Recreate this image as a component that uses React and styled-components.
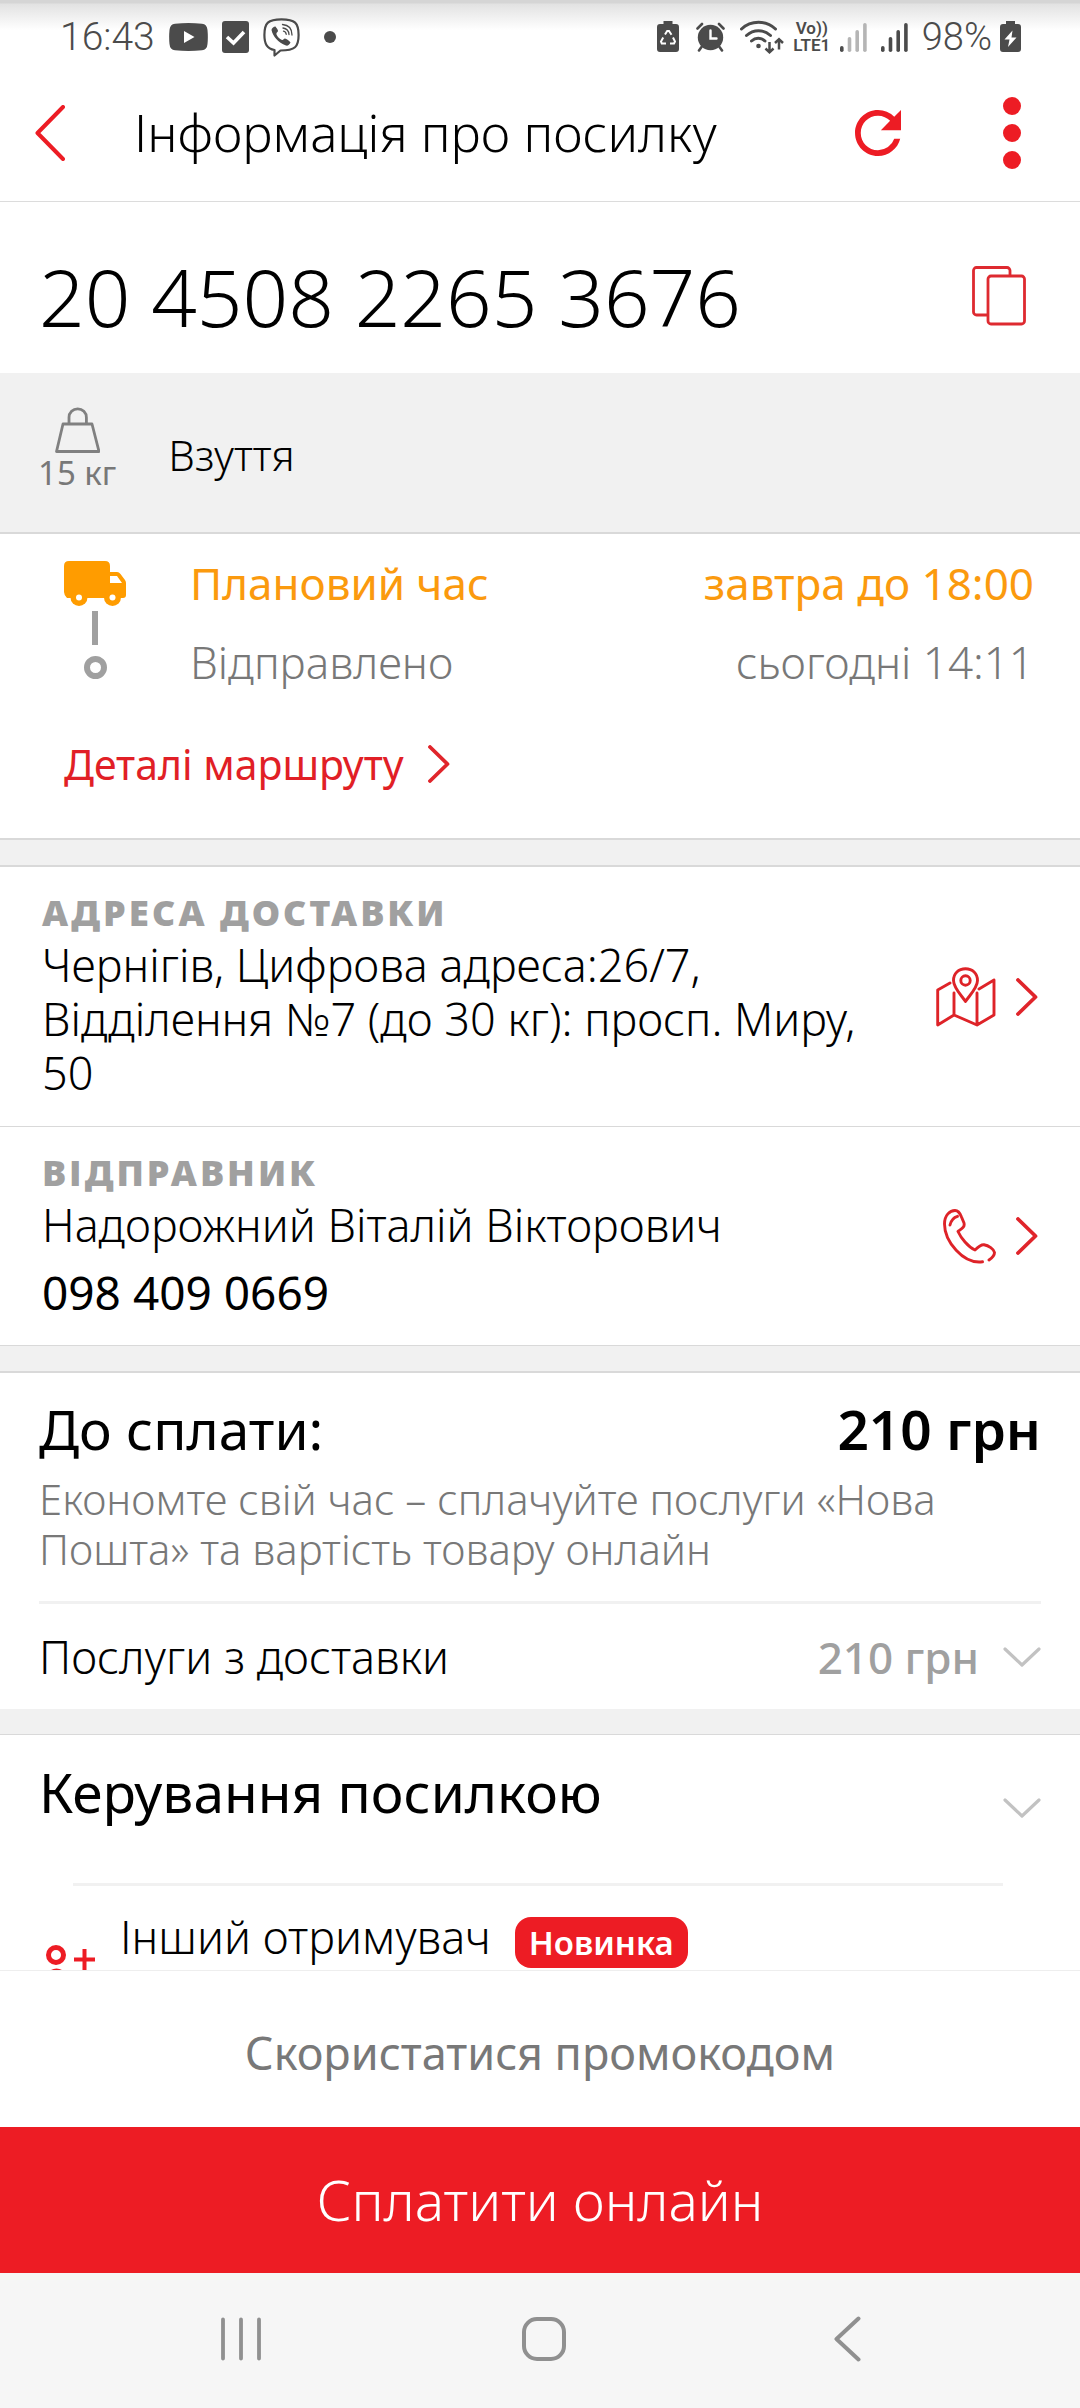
import styled, { createGlobalStyle } from 'styled-components'

const RED = '#ed1c24'
const GREY = '#787878'

const App = () => {
    return (
        <Page>
            <GlobalStyle />
            <StatusBar>
                <StatusSide>
                    <Clock>16:43</Clock>
                    <YoutubeIcon />
                    <TaskIcon />
                    <ViberIcon />
                    <Dot />
                </StatusSide>
                <StatusSide $tight>
                    <RecycleBatteryIcon />
                    <AlarmIcon />
                    <WifiIcon />
                    <Volte>
                        <span>Vo))</span>
                        <span>LTE1</span>
                    </Volte>
                    <SignalIcon level={1} />
                    <SignalIcon level={4} />
                    <Charge>98%</Charge>
                    <ChargingIcon />
                </StatusSide>
            </StatusBar>

            <Header>
                <IconButton aria-label='Назад'>
                    <svg width='30' height='56' viewBox='0 0 30 56' fill='none' stroke={RED} strokeWidth='4' strokeLinecap='round' strokeLinejoin='round'>
                        <path d='M28 2 2.5 28 28 54' />
                    </svg>
                </IconButton>
                <Title>Інформація про посилку</Title>
                <HeaderActions>
                    <IconButton aria-label='Оновити'>
                        <svg width='46' height='46' viewBox='4 4 16 16' fill={RED}>
                            <path d='M17.65 6.35A7.958 7.958 0 0 0 12 4c-4.42 0-7.99 3.58-7.99 8s3.57 8 7.99 8c3.73 0 6.84-2.55 7.73-6h-2.08A5.99 5.99 0 0 1 12 18c-3.31 0-6-2.69-6-6s2.69-6 6-6c1.66 0 3.14.69 4.22 1.78L13 11h7V4l-2.35 2.35z' />
                        </svg>
                    </IconButton>
                    <IconButton aria-label='Меню'>
                        <svg width='18' height='74' viewBox='0 0 18 74' fill={RED}>
                            <circle cx='9' cy='10' r='9' />
                            <circle cx='9' cy='37' r='9' />
                            <circle cx='9' cy='64' r='9' />
                        </svg>
                    </IconButton>
                </HeaderActions>
            </Header>

            <Content>
                <NumberRow>
                    <Number>20 4508 2265 3676</Number>
                    <IconButton aria-label='Копіювати'>
                        <svg width='54' height='60' viewBox='0 0 54 60' fill='none' stroke='#de2a30' strokeWidth='2.8'>
                            <path d='M38 9V4.500a3 3 0 0 0-3-3H4.500a3 3 0 0 0-3 3V46a3 3 0 0 0 3 3H15' />
                            <rect x='16' y='10' width='36.500' height='48' rx='3' />
                        </svg>
                    </IconButton>
                </NumberRow>

                <Cargo>
                    <Weight>
                        <svg width='45' height='46' viewBox='0 0 45 46' fill='none' stroke='#808080' strokeWidth='2.800' strokeLinejoin='round'>
                            <path d='M8 17H37L44 44.500H1.500Z' />
                            <path d='M14 17V10.500a8.700 8.700 0 0 1 17.400 0V17' />
                        </svg>
                        <span>15 кг</span>
                    </Weight>
                    <CargoName>Взуття</CargoName>
                </Cargo>

                <Route>
                    <RouteBody>
                        <Timeline>
                            <TruckIcon />
                            <TimelineBar />
                            <TimelineDot />
                        </Timeline>
                        <Steps>
                            <Step $current>
                                <span>Плановий час</span>
                                <span>завтра до 18:00</span>
                            </Step>
                            <Step>
                                <span>Відправлено</span>
                                <span>сьогодні 14:11</span>
                            </Step>
                        </Steps>
                    </RouteBody>
                    <RouteLink href='#route'>
                        Деталі маршруту
                        <ChevronRight />
                    </RouteLink>
                </Route>

                <Gap $top={2} $bottom={2} />

                <Contact href='#address' $line>
                    <ContactText>
                        <Label>Адреса доставки</Label>
                        <p>Чернігів, Цифрова адреса:26/7, Відділення №7 (до 30 кг): просп. Миру, 50</p>
                    </ContactText>
                    <ContactIcons>
                        <MapIcon />
                        <ChevronRight />
                    </ContactIcons>
                </Contact>
                <Contact href='#sender'>
                    <ContactText>
                        <Label>Відправник</Label>
                        <p>Надорожний Віталій Вікторович</p>
                        <Phone>098 409 0669</Phone>
                    </ContactText>
                    <ContactIcons>
                        <PhoneIcon />
                        <ChevronRight />
                    </ContactIcons>
                </Contact>

                <Gap $top={1} $bottom={2} />

                <Payment>
                    <Total>
                        <h2>До сплати:</h2>
                        <strong>210 грн</strong>
                    </Total>
                    <Hint>Економте свій час – сплачуйте послуги «Нова Пошта» та вартість товару онлайн</Hint>
                    <Services>
                        <span>Послуги з доставки</span>
                        <Price>
                            210 грн
                            <ChevronDown />
                        </Price>
                    </Services>
                </Payment>

                <Gap $top={0} $bottom={1} />

                <Manage>
                    <ManageTitle>
                        <h2>Керування посилкою</h2>
                        <ChevronDown />
                    </ManageTitle>
                    <Option>
                        <svg width='50' height='50' viewBox='0 0 50 50' fill='none' stroke={RED}>
                            <circle cx='10' cy='10' r='7.500' strokeWidth='5' />
                            <path d='M38.500 4V25M28 14.500H49' strokeWidth='4' />
                            <path d='M2.500 46V34a8 8 0 0 1 8-8 8 8 0 0 1 8 8v12' strokeWidth='5' />
                        </svg>
                        <span>Інший отримувач</span>
                        <Badge>Новинка</Badge>
                    </Option>
                </Manage>
            </Content>

            <Footer>
                <Promo>Скористатися промокодом</Promo>
                <Pay>Сплатити онлайн</Pay>
            </Footer>

            <SystemNav>
                <IconButton aria-label='Останні'>
                    <svg width='42' height='44' viewBox='0 0 42 44' stroke='#909090' strokeWidth='3.800' strokeLinecap='round'>
                        <path d='M3 2.500V41.500M21 2.500V41.500M39 2.500V41.500' />
                    </svg>
                </IconButton>
                <IconButton aria-label='Головна'>
                    <svg width='44' height='44' viewBox='0 0 44 44' fill='none' stroke='#909090' strokeWidth='4'>
                        <rect x='2' y='2' width='40' height='40' rx='13' />
                    </svg>
                </IconButton>
                <IconButton aria-label='Повернутися'>
                    <svg width='28' height='46' viewBox='0 0 28 46' fill='none' stroke='#909090' strokeWidth='4' strokeLinecap='round' strokeLinejoin='round'>
                        <path d='M25.500 2.500 3.500 23 25.500 43.500' />
                    </svg>
                </IconButton>
            </SystemNav>
        </Page>
    )
}

const YoutubeIcon = () => (
    <svg width='39' height='28' viewBox='0 0 39 28' fill='#4b4b4b'>
        <path fillRule='evenodd' d='M6 .7Q19.500-.6 33 .7 38 1 38.500 7 39.200 14 38.500 21 38 27 33 27.300 19.500 28.600 6 27.300 1 27 .5 21-.2 14 .5 7 1 1 6 .7ZM15 8V20L25.500 14Z' />
    </svg>
)

const TaskIcon = () => (
    <svg width='27' height='32' viewBox='0 0 27 32'>
        <rect width='27' height='32' rx='3' fill='#4b4b4b' />
        <path d='M5 16 11.500 22 22 11' fill='none' stroke='#fff' strokeWidth='3.600' />
    </svg>
)

const ViberIcon = () => (
    <svg width='37' height='39' viewBox='0 0 37 39' fill='none' stroke='#4b4b4b' strokeLinejoin='round' strokeLinecap='round'>
        <path d='M18.500 1.300C32 1.300 35.600 5 35.600 17 35.600 29 32 32.500 17.500 32.500L11.500 37.500V32C4 30.500 1.400 26 1.400 17 1.400 5 5 1.300 18.500 1.300Z' strokeWidth='2.200' />
        <path d='M12.500 8.500C13.500 10 15 11.500 15 13 14.500 14.500 13 14.500 13.500 16.500 14.500 19 16.500 21 19 22 20.500 22.500 20.500 20.500 22 20.500 23.500 20.800 26.500 22.800 27.500 24.500 26.500 27 24.500 28 23 27.500 15 24.500 10 18.500 8.500 12 8.500 10.500 10.500 8.500 12.500 8.500Z' fill='#4b4b4b' stroke='none' />
        <path d='M19.500 6.500C25.500 7 29 11 29 17M20 10C23.500 10.500 25.700 12.500 26 16.500M20.500 13.200C22.200 13.500 23 14.400 23.200 16.300' strokeWidth='1.300' />
    </svg>
)

const RecycleBatteryIcon = () => (
    <svg width='33' height='32' viewBox='0 0 33 32' fill='none'>
        <path d='M6.500 0H15.500V3H19Q22 3 22 6V28Q22 31 19 31H3Q0 31 0 28V6Q0 3 3 3H6.500Z' fill='#4b4b4b' />
        <path d='M8 13.500 10.200 10H12L14.500 13.800M16 16.500 18 20.500 17 22.500H13M9 22.500H4.800L4 20.500 6.200 16.500' stroke='#fff' strokeWidth='2' />
    </svg>
)

const AlarmIcon = () => (
    <svg width='38' height='30' viewBox='0 0 38 30' fill='none' stroke='#4b4b4b' strokeWidth='2.600' strokeLinecap='round'>
        <circle cx='14.500' cy='15.500' r='12.700' fill='#4b4b4b' stroke='none' />
        <path d='M1.500 6.500 6 2M27.500 6.500 23 2M5.500 25 3 28.500M23.500 25 26 28.500' />
        <path d='M14.500 8.500V16.500H20.500' stroke='#fff' strokeWidth='2.400' />
    </svg>
)

const WifiIcon = () => (
    <svg width='44' height='34' viewBox='0 0 44 34' fill='none' stroke='#4b4b4b' strokeWidth='3' strokeLinecap='round'>
        <path d='M1.500 9C11 0 26 0 35.500 9M6.500 15.500C13.500 9 23.500 9 30.500 15.500M11.500 21C15.500 17.300 21 17.300 25 21' />
        <circle cx='18.500' cy='26' r='2.300' fill='#4b4b4b' stroke='none' />
        <path d='M29.500 22V32M25.500 28.500 29.500 32.300 33.500 28.500M39 29.500V19.500M35 23 39 19.200 43 23' strokeWidth='2.500' strokeLinecap='butt' />
    </svg>
)

const SignalIcon = ({ level }) => (
    <svg width='35' height='30' viewBox='0 0 35 30'>
        {[6, 15, 22, 29].map((h, i) => (
            <rect key={h} x={i * 7.700} y={30 - h} width='3.600' height={h} rx='1.800' fill={i < level ? '#4b4b4b' : '#b5b5b5'} />
        ))}
    </svg>
)

const ChargingIcon = () => (
    <svg width='21' height='32' viewBox='0 0 21 32'>
        <path d='M6 0H15V3H18Q21 3 21 6V28Q21 31 18 31H3Q0 31 0 28V6Q0 3 3 3H6Z' fill='#4b4b4b' />
        <path d='M12.500 9.500 4.500 18.500H9.500L8 26 16.500 16.500H11.500Z' fill='#fff' />
    </svg>
)

const TruckIcon = () => (
    <svg width='62' height='45' viewBox='0 0 62 45' fill='#ff9c00'>
        <path fillRule='evenodd' d='M5 0H41Q46 0 46 5V11H53Q55 11 56.500 13L61 19Q62 20.500 62 22V34Q62 37 59 37H3Q0 34 0 31V5Q0 0 5 0ZM46 15V22H58L53 15Z' />
        <circle cx='15' cy='36.500' r='8.500' />
        <circle cx='48.500' cy='36.500' r='8.500' />
        <circle cx='15' cy='36.500' r='3' fill='#fff' />
        <circle cx='48.500' cy='36.500' r='3' fill='#fff' />
    </svg>
)

const MapIcon = () => (
    <svg width='60' height='60' viewBox='0 0 60 60' fill='none' stroke='#de2328' strokeWidth='2.900' strokeLinecap='round' strokeLinejoin='round'>
        <path d='M14 16 1.700 23V58L18 48 41 58 58 48V13L43 22M18 26V48M41 26V58' />
        <path d='M29.500 34.500C26 29 17.500 21 17.500 13.500 17.500 6.500 22.500 1.700 29.500 1.700S41.500 6.500 41.500 13.500C41.500 21 33 29 29.500 34.500Z' />
        <circle cx='29.500' cy='13.500' r='4.700' />
    </svg>
)

const PhoneIcon = () => (
    <svg width='53' height='55' viewBox='0 0 53 55' fill='none' stroke='#de2328' strokeWidth='2.900' strokeLinecap='round' strokeLinejoin='round'>
        <path d='M39.500 52.800C20 55.500 1.500 32 1.500 15 1.500 6 7 1.500 12 1.500 15.500 1.500 17 4 18.500 8L21 14C22 18 19 19.500 15 22.500 18 29 25 38 32 41 35.500 37.500 38 35.500 41 35.800 45.500 36.500 51 40 51.500 43.500 51.500 47 49 49 46 51' />
        <path d='M7 16C8 11.500 10.500 8.500 14.500 7.300' />
    </svg>
)

const ChevronRight = () => (
    <svg width='22' height='38' viewBox='0 0 22 38' fill='none' stroke='#e0252b' strokeWidth='3.800' strokeLinecap='round' strokeLinejoin='round'>
        <path d='M2 2 19.500 19 2 36' />
    </svg>
)

const ChevronDown = () => (
    <svg width='38' height='20' viewBox='0 0 38 20' fill='none' stroke='#c2c2c2' strokeWidth='3.200' strokeLinecap='round' strokeLinejoin='round'>
        <path d='M2 2 19 18 36 2' />
    </svg>
)

const GlobalStyle = createGlobalStyle`
    *{
        box-sizing:border-box;
    }
    body{
        margin:0;
        background:#fff;
        color:#000;
        font-family:'Noto Sans', 'Open Sans', sans-serif;
        font-weight:350;
    }
    h1,h2,p{
        margin:0;
        font-size:inherit;
        font-weight:inherit;
    }
    svg{
        display:block;
        flex-shrink:0;
    }
    a{
        color:inherit;
        text-decoration:none;
    }
    button{
        border:0;
        padding:0;
        background:none;
        font:inherit;
        color:inherit;
    }
`
const Page = styled.div`
    display:flex;
    flex-direction:column;
    height:100vh;
`
const StatusBar = styled.div`
    display:flex;
    justify-content:space-between;
    align-items:center;
    height:64px;
    padding:10px 59px 0 60px;
    background:linear-gradient(#d5d5d5 3px, #e2e2e2 4px, #fff 30px);
    color:#4b4b4b;
    font-family:Roboto, sans-serif;
`
const StatusSide = styled.div`
    display:flex;
    align-items:center;
    gap:${(props) => (props.$tight ? '6px' : '14px')};
`
const Clock = styled.span`
    font-size:39px;
    line-height:44px;
`
const Charge = styled.span`
    padding-right:2px;
    font-size:38px;
    line-height:44px;
`
const Dot = styled.i`
    width:12px;
    height:12px;
    margin-left:10px;
    border-radius:50%;
    background:#4b4b4b;
`
const Volte = styled.span`
    display:flex;
    flex-direction:column;
    align-items:center;
    width:44px;
    font-size:17px;
    line-height:17px;
    font-weight:600;
`
const Header = styled.header`
    display:flex;
    align-items:center;
    padding:0 59px 0 35px;
    height:138px;
    border-bottom:1px solid #dcdcdc;
`
const Title = styled.h1`
    flex:1;
    margin-left:69px;
    padding-bottom:2px;
    font-size:51px;
    line-height:60px;
`
const HeaderActions = styled.div`
    display:flex;
    align-items:center;
    gap:102px;
`
const IconButton = styled.button`
    display:flex;
    justify-content:center;
    align-items:center;
`
const Content = styled.main`
    flex:1;
    min-height:0;
    overflow-y:auto;
    scrollbar-width:none;
`
const NumberRow = styled.div`
    display:flex;
    justify-content:space-between;
    align-items:center;
    padding:46px 54px 29px 39px;
`
const Number = styled.div`
    font-size:80px;
    line-height:96px;
`
const Cargo = styled.section`
    display:flex;
    align-items:center;
    padding:34px 38px 39px;
    background:#f1f1f1;
    border-bottom:2px solid #d9d9d9;
`
const Weight = styled.div`
    display:flex;
    flex-direction:column;
    align-items:center;
    color:${GREY};
    font-size:33px;
    line-height:40px;
    font-weight:400;
`
const CargoName = styled.div`
    padding-top:10px;
    margin-left:52px;
    font-size:42px;
    line-height:50px;
`
const Route = styled.section`
    padding:22px 46px 47px 64px;
`
const RouteBody = styled.div`
    display:flex;
    gap:64px;
`
const Timeline = styled.div`
    display:flex;
    flex-direction:column;
    align-items:center;
    padding-top:5px;
`
const TimelineBar = styled.i`
    width:6px;
    height:34px;
    margin:5px 0 11px;
    background:#a0a0a0;
`
const TimelineDot = styled.i`
    width:23px;
    height:23px;
    border:6px solid #a0a0a0;
    border-radius:50%;
`
const Steps = styled.div`
    flex:1;
    display:flex;
    flex-direction:column;
    gap:25px;
`
const Step = styled.div`
    display:flex;
    justify-content:space-between;
    font-size:44px;
    line-height:54px;
    color:${(props) => (props.$current ? '#fb9a0e' : GREY)};
    font-weight:${(props) => (props.$current ? 450 : 'inherit')};
`
const RouteLink = styled.a`
    display:inline-flex;
    align-items:center;
    gap:24px;
    margin-top:48px;
    font-size:41px;
    line-height:54px;
    font-weight:450;
    color:#e11f26;
`
const Gap = styled.div`
    height:${(props) => 25 + props.$top + props.$bottom}px;
    background:#f1f1f1;
    border:0 solid #d9d9d9;
    border-top-width:${(props) => props.$top}px;
    border-bottom-width:${(props) => props.$bottom}px;
`
const Contact = styled.a`
    display:flex;
    align-items:center;
    gap:56px;
    padding:26px 42px 26px 42px;
    font-size:45px;
    line-height:54px;
    border-bottom:${(props) => (props.$line ? '1px solid #d9d9d9' : '0')};
`
const ContactText = styled.div`
    flex:1;
`
const Label = styled.h2`
    margin-bottom:5px;
    font-size:36px;
    line-height:40px;
    && {
        font-weight:900;
    }
    letter-spacing:3px;
    text-transform:uppercase;
    color:#a0a0a0;
`
const Phone = styled.p`
    margin-top:13px;
    && {
        font-weight:450;
        font-size:46px;
    }
`
const ContactIcons = styled.div`
    display:flex;
    align-items:center;
    gap:20px;
`
const Payment = styled.section`
    padding:21px 39px 0;
`
const Total = styled.div`
    display:flex;
    justify-content:space-between;
    font-size:55px;
    line-height:70px;
    font-weight:450;
    strong{
        font-weight:650;
    }
`
const Hint = styled.p`
    padding:10px 0 27px;
    font-size:42px;
    line-height:50px;
    color:${GREY};
    border-bottom:3px solid #f1f1f1;
`
const Services = styled.div`
    display:flex;
    justify-content:space-between;
    align-items:center;
    height:105px;
    font-size:45px;
    line-height:54px;
`
const Price = styled.button`
    display:flex;
    align-items:center;
    gap:24px;
    && {
        font-size:44px;
        font-weight:500;
        color:#a0a0a0;
    }
`
const Manage = styled.section`
    padding:22px 39px 0;
`
const ManageTitle = styled.div`
    display:flex;
    justify-content:space-between;
    font-size:55px;
    line-height:70px;
    font-weight:450;
    svg{
        margin-top:41px;
    }
`
const Option = styled.div`
    display:flex;
    align-items:flex-start;
    margin:56px 38px 0 34px;
    padding-top:24px;
    border-top:3px solid #f1f1f1;
    font-size:45px;
    line-height:54px;
    svg{
        margin:35px 24px 0 -27px;
    }
`
const Badge = styled.span`
    margin:7px 0 0 24px;
    padding:0 14px;
    border-radius:16px;
    background:${RED};
    color:#fff;
    font-size:33px;
    line-height:51px;
    font-weight:650;
`
const Footer = styled.footer`
    border-top:1px solid #eee;
    background:#fff;
`
const Promo = styled.button`
    && {
        display:block;
        width:100%;
        padding:52px 0 44px;
        font-size:45px;
        line-height:60px;
        font-weight:450;
        color:${GREY};
    }
`
const Pay = styled.button`
    && {
        display:block;
        width:100%;
        padding:38px 0;
        background:${RED};
        color:#fff;
        font-size:55px;
        line-height:70px;
    }
`
const SystemNav = styled.nav`
    display:grid;
    grid-template-columns:repeat(3, 1fr);
    height:135px;
    padding:0 82px 4px 90px;
    background:#f6f6f6;
`

export default App
